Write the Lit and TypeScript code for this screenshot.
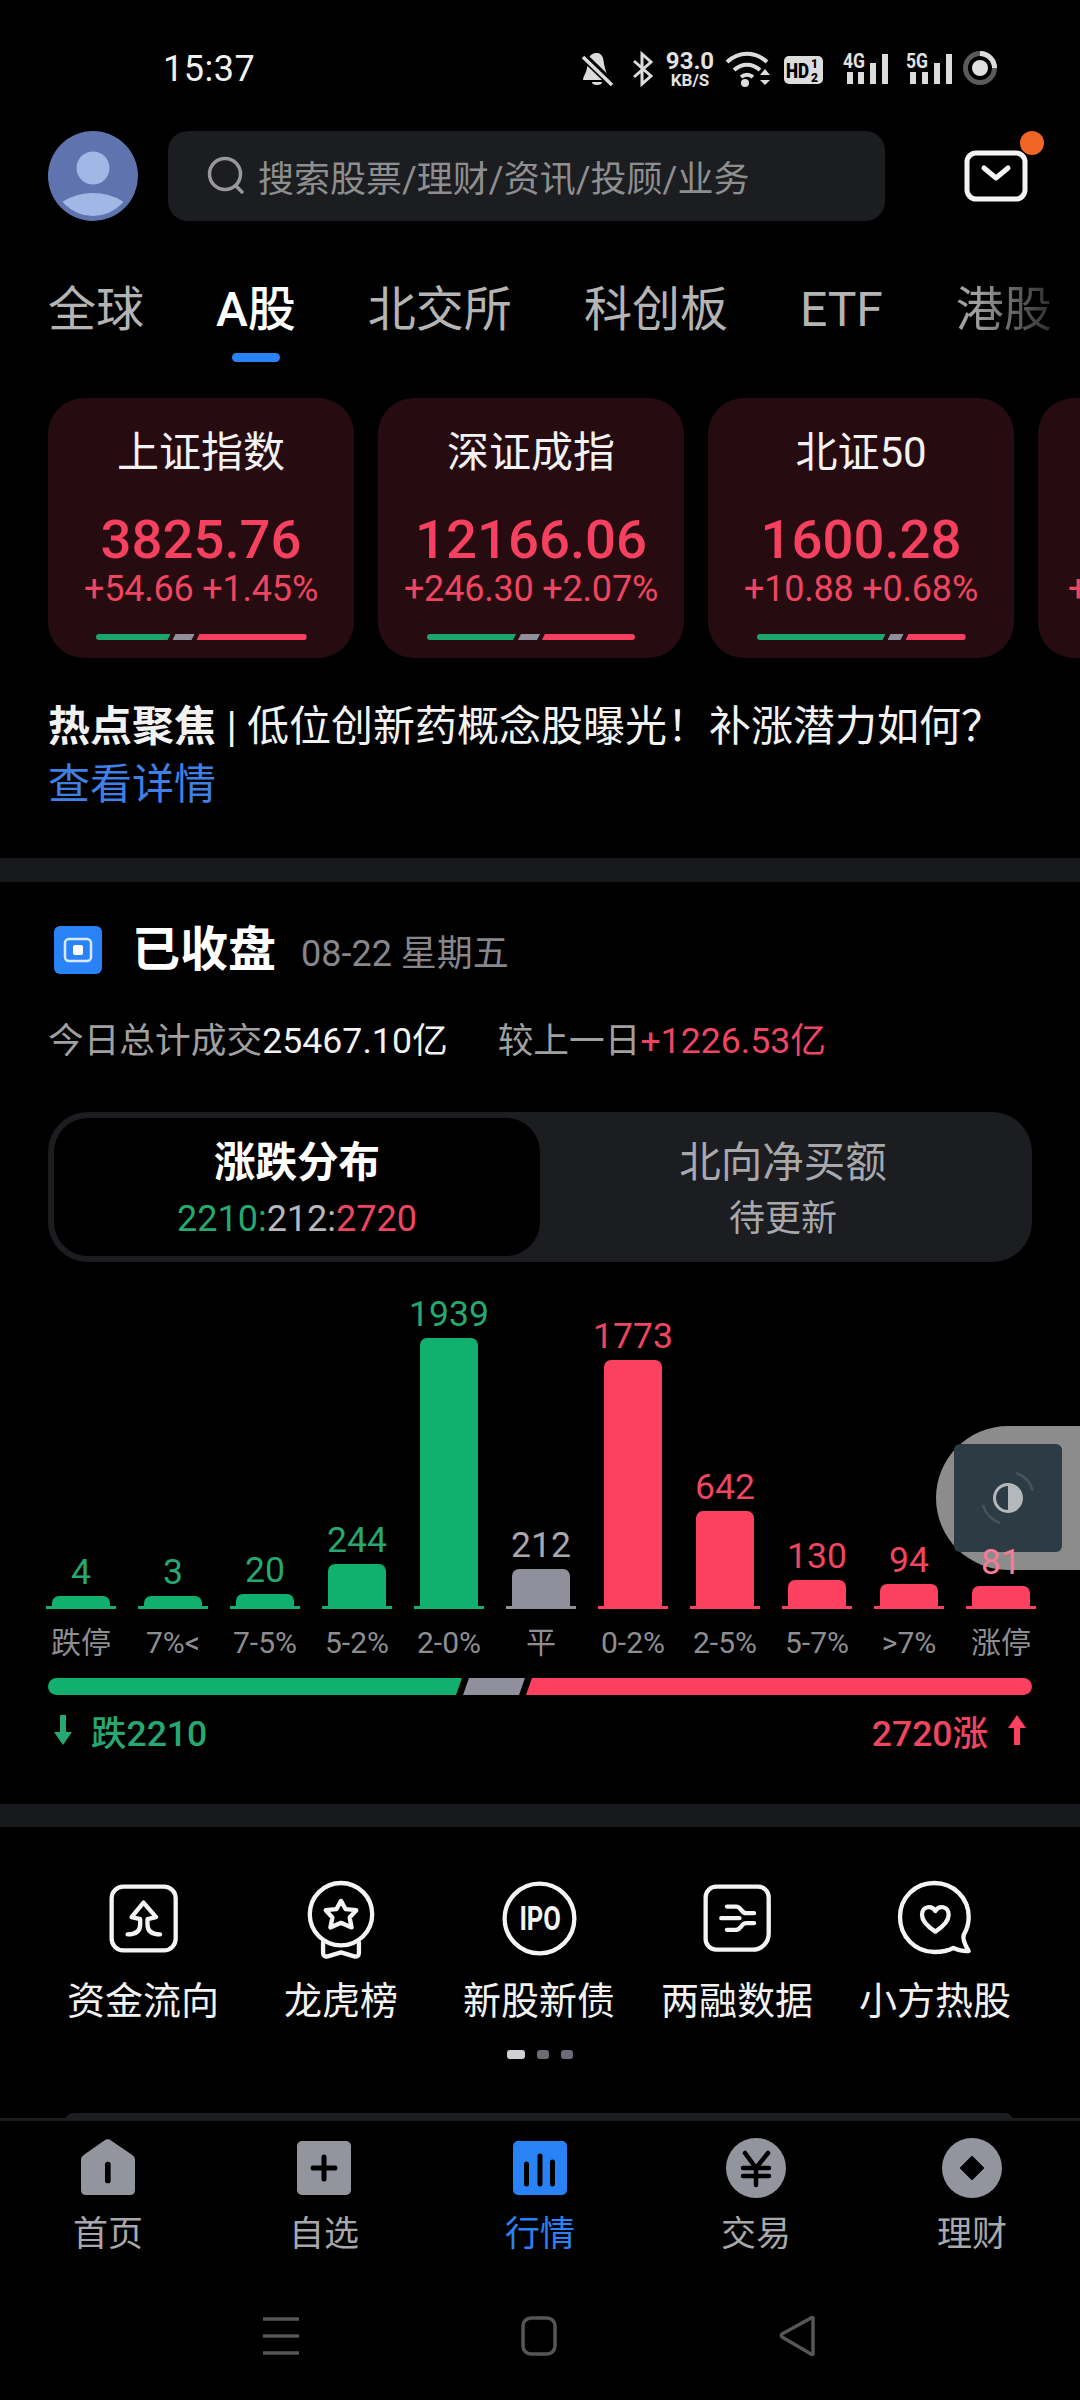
import { LitElement, html, css, svg } from "lit";
import { customElement } from "lit/decorators.js";

const bars = [
  { v: "4", h: 10, c: "g", l: "跌停" },
  { v: "3", h: 10, c: "g", l: "7%<" },
  { v: "20", h: 12, c: "g", l: "7-5%" },
  { v: "244", h: 42, c: "g", l: "5-2%" },
  { v: "1939", h: 268, c: "g", l: "2-0%" },
  { v: "212", h: 37, c: "n", l: "平" },
  { v: "1773", h: 246, c: "r", l: "0-2%" },
  { v: "642", h: 95, c: "r", l: "2-5%" },
  { v: "130", h: 26, c: "r", l: "5-7%" },
  { v: "94", h: 22, c: "r", l: ">7%" },
  { v: "81", h: 20, c: "r", l: "涨停" },
];

const cards = [
  { t: "上证指数", v: "3825.76", s: "+54.66 +1.45%", g: 75, n: 22, r: 110 },
  { t: "深证成指", v: "12166.06", s: "+246.30 +2.07%", g: 89, n: 22, r: 93 },
  { t: "北证50", v: "1600.28", s: "+10.88 +0.68%", g: 129, n: 16, r: 60 },
];

const shortcutIcons = [
  svg`<rect x="66" y="48" width="193" height="192" rx="35"/><path d="M114 192c22 0 38-8 38-30v-16l-26-6 36-44 38 44-26 6v16c0 22 16 30 38 30"/>`,
  svg`<circle cx="756" cy="130" r="94"/><path d="M756 90l14 25 32 3-20 22 6 30-32-14-32 14 6-30-20-22 32-3z"/><path d="M702 215v32c0 8 6 12 14 10l40-12 40 12c8 2 14-2 14-10v-32"/>`,
  svg`<circle cx="1350" cy="147" r="105"/><text x="1352" y="182" text-anchor="middle" font-size="98" font-weight="700" textLength="125" lengthAdjust="spacingAndGlyphs" class="ipo">IPO</text>`,
  svg`<path d="M80 48h126a32 32 0 0 1 32 32v110a48 48 0 0 1-48 48H80a32 32 0 0 1-32-32V80a32 32 0 0 1 32-32z"/><path d="M112 108h28c15 0 15 20 30 20h24M112 178h28c15 0 15-20 30-20h24M95 143h55"/>`,
  svg`<path d="M795 235c-15 8-35 12-57 12-58 0-103-47-103-105S680 40 738 40s103 45 103 102c0 20-7 40-14 52-5 10 2 32 14 50-16 2-34-4-46-9z"/><path d="M741 186c-18-12-40-28-40-50 0-28 30-30 40-12 10-18 40-16 40 12 0 22-22 38-40 50z"/>`,
];

const shortcuts = ["资金流向", "龙虎榜", "新股新债", "两融数据", "小方热股"];
const shortcutBoxes = [
  { vb: "52 34 220 220", w: 73, h: 73 },
  { vb: "645 18 222 250", w: 74, h: 83 },
  { vb: "1228 25 244 244", w: 81, h: 81 },
  { vb: "34 34 220 220", w: 73, h: 73 },
  { vb: "620 25 240 240", w: 80, h: 80 },
];

const navIcons = [
  svg`<g transform="translate(0 1) scale(0.3333) translate(-63 -42)"><path fill="#92949e" d="M132 47q11-8 22 0l62 42q9 6 9 14v92q0 15-15 15H78q-15 0-15-15V103q0-8 9-14z"/><rect x="135" y="110" width="17" height="65" rx="8" fill="#000"/></g>`,
  svg`<rect x="0" y="3" width="54" height="54" rx="5" fill="#92949e"/><path d="M16 30h22M27 19v22" stroke="#000" stroke-width="5" fill="none" stroke-linecap="round"/>`,
  svg`<rect x="0" y="3" width="54" height="54" rx="5" fill="#2a83f6"/><path d="M13.500 26v20M27 18v28M39.500 24v22" stroke="#000" stroke-width="5" fill="none" stroke-linecap="round"/>`,
  svg`<circle cx="30" cy="30" r="30" fill="#92949e"/><path d="M19 15l11 15 12-15M17 30h26M17 38h26M30 30v17" stroke="#000" stroke-width="4.500" fill="none" stroke-linecap="round"/>`,
  svg`<circle cx="30" cy="30" r="30" fill="#92949e"/><path d="M30 19l11 11-11 11-11-11z" fill="#000" stroke="#000" stroke-linejoin="round" stroke-width="2"/>`,
];
const navLabels = ["首页", "自选", "行情", "交易", "理财"];
const navW = [54, 54, 54, 60, 60];
const navLeft = [48, 264, 480, 696, 912];

@customElement("app-root")
export class AppRoot extends LitElement {
  static styles = css`
    :host { display: block; width: 1080px; height: 2400px; background: #000; color: #fff; overflow: hidden; position: relative;
      font-family: Roboto, "Noto Sans CJK SC", sans-serif; }
    * { box-sizing: border-box; }
    .status { height: 131px; padding: 0 0 0 163px; display: flex; align-items: flex-start; justify-content: space-between; }
    .time { font-size: 36px; line-height: 40px; margin-top: 49px; letter-spacing: 0.5px; color: #f2f2f2; }
    .sicons { display: block; margin: 50px 83px 0 0; color: #dcdcdc; }
    .stext { font-family: Roboto, sans-serif; font-weight: 700; fill: #e2e2e2; }
    .search-row { display: flex; align-items: center; height: 90px; padding-left: 48px; }
    .avatar { width: 90px; height: 90px; display: block; flex: none; }
    .search { width: 717px; height: 90px; margin-left: 30px; background: #1b1d21; border-radius: 20px; display: flex; align-items: center; padding-left: 39px; color: #8e8e8e; font-size: 36px; font-weight: 400; gap: 13px; flex: none; }
    .search svg { flex: none; }
    .mail { position: relative; margin-left: 79px; width: 64px; height: 52px; flex: none; }
    .mail svg { display: block; }
    .mail i { position: absolute; width: 24px; height: 24px; background: #ef6524; border-radius: 50%; right: -16px; top: -19px; }
    .tabs { display: flex; height: 98px; margin-top: 49px; padding-left: 48px; font-size: 48px; color: #b4b4b4; font-weight: 400; overflow: hidden; line-height: 80px; }
    .tab { flex: none; position: relative; }
    .tab.active { color: #fff; font-weight: 500; }
    .tab.active::after { content: ""; position: absolute; left: 16px; bottom: 6px; width: 48px; height: 9px; background: #2a83f6; border-radius: 5px; }
    .tab.fade { background: linear-gradient(90deg, #a0a0a0 20%, #2c2c2c 100%); -webkit-background-clip: text; background-clip: text; color: transparent; }
    .cards { display: flex; gap: 24px; padding-left: 48px; margin-top: 30px; overflow: hidden; width: 1080px; }
    .card { width: 306px; height: 260px; flex: none; background: #260c10; border-radius: 36px; display: flex; flex-direction: column; align-items: center; }
    .card .t { font-size: 42px; line-height: 50px; margin-top: 30px; color: #f2f2f2; font-weight: 400; }
    .card .v { font-size: 54.500px; line-height: 60px; margin-top: 31px; color: #f5405f; font-weight: 500; }
    .card .s { font-size: 36px; line-height: 38px; margin-top: 1px; color: #ee4560; font-weight: 400; white-space: nowrap; letter-spacing: -0.2px; }
    .card.peek-card { align-items: flex-start; padding-left: 30px; }
    .card.peek-card .s { margin-top: 172px; }
    .mini { display: flex; gap: 2px; height: 6px; margin-top: 26px; }
    .mini i { display: block; height: 6px; clip-path: polygon(3px 0, 100% 0, calc(100% - 3px) 100%, 0 100%); }
    .mini i:first-child { border-radius: 3px 0 0 3px; clip-path: polygon(0 0, 100% 0, calc(100% - 3px) 100%, 0 100%); }
    .mini i:last-child { border-radius: 0 3px 3px 0; clip-path: polygon(3px 0, 100% 0, 100% 100%, 0 100%); }
    .gb { background: #1ca66d; } .nb { background: #8f909c; } .rb { background: #f5405f; }
    .hot { padding: 40px 48px 0; font-size: 42px; line-height: 58px; color: #f2f2f2; font-weight: 400; height: 200px; white-space: nowrap; }
    .hot b { font-weight: 700; }
    .hot a { color: #3f80e6; display: block; font-size: 42px; }
    .divider { height: 24px; background: #16181b; }
    .sec-head { display: flex; align-items: center; padding: 44px 0 0 54px; height: 92px; }
    .sec-icon { width: 48px; height: 48px; display: block; flex: none; }
    .sec-title { font-size: 48px; line-height: 56px; font-weight: 700; margin-left: 30px; }
    .sec-date { font-size: 36px; color: #86868c; margin-left: 25px; font-weight: 400; }
    .volume { padding: 0 0 0 48px; margin-top: 42px; font-size: 35.700px; line-height: 50px; color: #a0a0a0; font-weight: 400; display: flex; }
    .volume .w { color: #f2f2f2; }
    .volume .r { color: #ef4563; }
    .volume .gap { width: 50px; }
    .toggle { margin: 46px 48px 0; height: 150px; background: #1b1d21; border-radius: 40px; padding: 6px; display: flex; }
    .opt { flex: 1; display: flex; flex-direction: column; align-items: center; color: #a8a8ac; }
    .opt.active { flex: none; width: 486px; background: #000; border-radius: 34px; color: #fff; }
    .opt .a { font-size: 41.500px; line-height: 50px; margin-top: 20px; font-weight: 400; }
    .opt.active .a { font-weight: 700; }
    .opt .b { font-size: 36px; line-height: 44px; margin-top: 9px; font-weight: 400; }
    .green { color: #26a871; } .red { color: #ee4560; } .grey { color: #b8b8bc; }
    .chart { display: flex; height: 347px; gap: 22px; padding-left: 46px; align-items: flex-end; }
    .col { width: 70px; display: flex; flex-direction: column; align-items: center; flex: none; }
    .col .val { font-size: 35.500px; line-height: 40px; margin-bottom: 4px; font-weight: 400; white-space: nowrap; }
    .col .bar { width: 58px; border-radius: 7px 7px 0 0; }
    .col .base { width: 70px; height: 3px; }
    .val.g { color: #26a871; } .val.n { color: #a8a8ae; } .val.r { color: #ee4560; position: relative; z-index: 3; }
    .col:last-child .val { color: #f27d94; }
    .bar.g, .base.g { background: #11b06f; } .bar.n, .base.n { background: #8f909c; } .bar.r, .base.r { background: #fb4060; }
    .cats { display: flex; padding-left: 35px; margin-top: 15px; }
    .cats span { width: 92px; flex: none; text-align: center; font-size: 30px; line-height: 38px; color: #8e8e92; font-weight: 400; white-space: nowrap; }
    .bigbar { display: flex; margin: 16px 48px 0; height: 17px; }
    .seg { height: 17px; }
    .seg.g { width: 414px; background: #11b06f; border-radius: 9px 0 0 9px; clip-path: polygon(0 0, 100% 0, calc(100% - 6px) 100%, 0 100%); }
    .seg.n { width: 62px; background: #8f909c; margin-left: 1px; clip-path: polygon(6px 0, 100% 0, calc(100% - 6px) 100%, 0 100%); }
    .seg.r { flex: 1; background: #fb4060; margin-left: 1px; border-radius: 0 9px 9px 0; clip-path: polygon(6px 0, 100% 0, 100% 100%, 0 100%); }
    .foot { display: flex; justify-content: space-between; align-items: center; padding: 0 54px; margin-top: 13px; height: 44px; font-size: 35.500px; font-weight: 500; }
    .foot div { display: flex; align-items: center; }
    .foot .l svg { margin-right: 19px; }
    .foot .rr svg { margin-left: 20px; }
    .divider2 { height: 23px; margin-top: 52px; background: #16181b; }
    .shortcuts { display: flex; padding-left: 44px; margin-top: 49px; }
    .sc { width: 198px; flex: none; display: flex; flex-direction: column; align-items: center; }
    .sc .ic { height: 84px; display: flex; align-items: center; justify-content: center; }
    .sc svg { fill: none; stroke: #f4f4f4; stroke-width: 13; stroke-linejoin: round; stroke-linecap: round; display: block; }
    .sc .ipo { fill: #f4f4f4; stroke: none; font-family: Roboto, sans-serif; }
    .sc span { font-size: 38px; line-height: 48px; margin-top: 17px; color: #f2f2f2; font-weight: 400; white-space: nowrap; }
    .dots { display: flex; justify-content: center; gap: 12px; margin-top: 25px; }
    .dots i { display: block; width: 12px; height: 9px; border-radius: 3px; background: #6b6b76; }
    .dots i:first-child { width: 18px; background: #cfcfd4; }
    .peek { position: absolute; left: 65px; width: 948px; top: 2113px; height: 8px; background: #1b1d21; border-radius: 16px 16px 0 0; }
    .nav { position: absolute; left: 0; top: 2118px; width: 1080px; height: 282px; background: #000; border-top: 3px solid #1b1d21; }
    .ni { position: absolute; top: 17px; width: 120px; display: flex; flex-direction: column; align-items: center; color: #a8a8ac; }
    .ni svg { display: block; height: 60px; }
    .ni span { font-size: 35px; line-height: 44px; margin-top: 15px; font-weight: 400; }
    .ni.on { color: #2a83f6; }
    .sys { position: absolute; top: 195px; left: 0; width: 1080px; height: 40px; display: block; }
    .float { position: absolute; left: 936px; top: 1426px; width: 144px; height: 144px; background: #8c8c8c; border-radius: 72px 0 0 72px; z-index: 2; }
    .float .inner { position: absolute; left: 18px; top: 18px; width: 108px; height: 108px; background: #2d3b44; border-radius: 6px; display: flex; align-items: center; justify-content: center; }
  `;

  render() {
    return html`
      <div class="status">
        <div class="time">15:37</div>
        ${this.statusIcons()}
      </div>
      <div class="search-row">
        <svg class="avatar" viewBox="0 0 90 90"><defs><clipPath id="av"><circle cx="45" cy="45" r="40"/></clipPath></defs>
          <circle cx="45" cy="45" r="45" fill="#5f74ae"/>
          <circle cx="45" cy="37" r="16.500" fill="#a3b7e6"/>
          <g clip-path="url(#av)"><ellipse cx="45" cy="90" rx="42" ry="28" fill="#a3b7e6"/></g>
        </svg>
        <div class="search">
          <svg width="38" height="40" viewBox="0 0 38 40" fill="none" stroke="#989898" stroke-width="3.500" stroke-linecap="round"><circle cx="18" cy="18" r="15.500"/><path d="M29 30l6 6"/></svg>
          <span>搜索股票/理财/资讯/投顾/业务</span>
        </div>
        <div class="mail">
          <svg width="64" height="52" viewBox="0 0 64 52" fill="none" stroke="#f4f4f6" stroke-width="5" stroke-linecap="round" stroke-linejoin="round"><rect x="3" y="3" width="58" height="46" rx="9"/><path d="M20 18l12 10 12-10"/></svg>
          <i></i>
        </div>
      </div>
      <div class="tabs">
        <div class="tab" style="margin-right:72px">全球</div>
        <div class="tab active" style="margin-right:72px">A股</div>
        <div class="tab" style="margin-right:72px">北交所</div>
        <div class="tab" style="margin-right:72px">科创板</div>
        <div class="tab" style="margin-right:73px">ETF</div>
        <div class="tab fade">港股</div>
      </div>
      <div class="cards">
        ${cards.map((c) => html`<div class="card">
          <div class="t">${c.t}</div>
          <div class="v">${c.v}</div>
          <div class="s">${c.s}</div>
          <div class="mini">
            <i class="gb" style="width:${c.g}px"></i><i class="nb" style="width:${c.n}px"></i><i class="rb" style="width:${c.r}px"></i>
          </div>
        </div>`)}
        <div class="card peek-card"><div class="s">+</div></div>
      </div>
      <div class="hot">
        <b>热点聚焦</b> | 低位创新药概念股曝光\uFF01补涨潜力如何\uFF1F
        <a>查看详情</a>
      </div>
      <div class="divider"></div>
      <div class="sec-head">
        <svg class="sec-icon" viewBox="0 0 48 48"><rect width="48" height="48" rx="6" fill="#2a83f6"/><rect x="11" y="13" width="26" height="22" rx="4" fill="none" stroke="#d8e8ff" stroke-width="2.500"/><rect x="19" y="19" width="10" height="10" rx="2" fill="#fff"/></svg>
        <div class="sec-title">已收盘</div>
        <div class="sec-date">08-22 星期五</div>
      </div>
      <div class="volume">
        <span>今日总计成交</span><span class="w">25467.10亿</span><span class="gap"></span><span>较上一日</span><span class="r">+1226.53亿</span>
      </div>
      <div class="toggle">
        <div class="opt active">
          <div class="a">涨跌分布</div>
          <div class="b"><span class="green">2210:</span><span class="grey">212:</span><span class="red">2720</span></div>
        </div>
        <div class="opt">
          <div class="a">北向净买额</div>
          <div class="b">待更新</div>
        </div>
      </div>
      <div class="chart">
        ${bars.map((b) => html`<div class="col">
          <div class="val ${b.c}">${b.v}</div>
          <div class="bar ${b.c}" style="height:${b.h}px"></div>
          <div class="base ${b.c}"></div>
        </div>`)}
      </div>
      <div class="cats">${bars.map((b) => html`<span>${b.l}</span>`)}</div>
      <div class="bigbar"><div class="seg g"></div><div class="seg n"></div><div class="seg r"></div></div>
      <div class="foot">
        <div class="l green"><svg width="18" height="32" viewBox="0 0 18 32"><path d="M6 1h6v17h6L9 31 0 18h6z" fill="#26a871"/></svg>跌2210</div>
        <div class="rr red">2720涨<svg width="18" height="32" viewBox="0 0 18 32"><path d="M6 31h6V14h6L9 1 0 14h6z" fill="#fb4060"/></svg></div>
      </div>
      <div class="divider2"></div>
      <div class="shortcuts">
        ${shortcuts.map((s, i) => html`<div class="sc">
          <div class="ic"><svg width="${shortcutBoxes[i].w}" height="${shortcutBoxes[i].h}" viewBox="${shortcutBoxes[i].vb}">${shortcutIcons[i]}</svg></div>
          <span>${s}</span>
        </div>`)}
      </div>
      <div class="dots"><i></i><i></i><i></i></div>
      <div class="float"><div class="inner">
        <svg width="60" height="70" viewBox="0 0 60 70" fill="none"><circle cx="30" cy="35" r="13.500" stroke="#b4b8ba" stroke-width="3"/><path d="M30 21.500a13.500 13.500 0 0 1 0 27z" fill="#b4b8ba"/><path d="M38 10a27 27 0 0 1 17 18M22 60A27 27 0 0 1 5 42" stroke="#47545b" stroke-width="2.500"/></svg>
      </div></div>
      <div class="peek"></div>
      <div class="nav">
        ${navIcons.map((ic, i) => html`<div class="ni ${i === 2 ? "on" : ""}" style="left:${navLeft[i]}px">
          <svg width="${navW[i]}" viewBox="0 0 ${navW[i]} 60">${ic}</svg>
          <span>${navLabels[i]}</span>
        </div>`)}
        <svg class="sys" width="1080" height="40" viewBox="0 0 1080 40" fill="none" stroke="#565658" stroke-width="3.500" stroke-linejoin="round">
          <path d="M263 3h36M263 20h36M263 37h36"/>
          <rect x="523" y="2" width="32" height="36" rx="8"/>
          <path d="M813 3v34a1 1 0 0 1-2 1L782 21a2 2 0 0 1 0-3L811 2a1 1 0 0 1 2 1z"/>
        </svg>
      </div>
    `;
  }

  statusIcons() {
    return html`<svg class="sicons" width="420" height="40" viewBox="577 50 420 40">
      <g fill="#dcdcdc">
        <path d="M597 53c3 0 5 2 6 5 1 5 2 12 4 16 1 2 5 3 5 6H583c0-2 1-4 2-6 3-5 2-12 4-16 1-3 4-5 8-5zM592 82h10c0 2-2 3-5 3s-5-1-5-3z"/>
      </g>
      <path d="M583 56l30 29" stroke="#000" stroke-width="8"/>
      <path d="M583 57l29 28" stroke="#dcdcdc" stroke-width="3.500"/>
      <path d="M634 61l17 15-9 8V54l9 8-17 15" fill="none" stroke="#dcdcdc" stroke-width="3"/>
      <text x="690" y="69" class="stext" font-size="24" text-anchor="middle">93.0</text>
      <text x="690" y="86" class="stext" font-size="17" text-anchor="middle">KB/S</text>
      <path d="M727 62c12-11 28-11 40 0M734 70c8-7 18-7 26 0M741 77c4-3 8-3 12 0" fill="none" stroke="#dcdcdc" stroke-width="4"/>
      <circle cx="745" cy="83" r="4" fill="#dcdcdc"/>
      <path d="M760 75l5-6 5 6zM760 80h10l-5 5z" fill="#dcdcdc"/>
      <rect x="784" y="56" width="39" height="28" rx="5" fill="#dcdcdc"/>
      <text x="786" y="78" font-size="21" font-weight="900" fill="#000" textLength="23" lengthAdjust="spacingAndGlyphs" style="font-family:Roboto,sans-serif">HD</text>
      <text x="811" y="68" font-size="12" font-weight="900" fill="#000" style="font-family:Roboto,sans-serif">1</text>
      <text x="811" y="82" font-size="12" font-weight="900" fill="#000" style="font-family:Roboto,sans-serif">2</text>
      <text x="843" y="68" class="stext" font-size="21" textLength="22" lengthAdjust="spacingAndGlyphs">4G</text>
      <g fill="#dcdcdc"><rect x="847" y="72" width="6" height="12"/><rect x="858" y="72" width="6" height="12"/><rect x="870" y="63" width="6" height="21"/><rect x="882" y="54" width="6" height="30"/></g>
      <text x="906" y="68" class="stext" font-size="21" textLength="22" lengthAdjust="spacingAndGlyphs">5G</text>
      <g fill="#dcdcdc"><rect x="910" y="72" width="6" height="12"/><rect x="922" y="72" width="6" height="12"/><rect x="934" y="63" width="6" height="21"/><rect x="946" y="54" width="6" height="30"/></g>
      <circle cx="980" cy="68" r="14.500" fill="none" stroke="#5a5a5a" stroke-width="5"/>
      <path d="M980 53.500a14.500 14.500 0 0 1 14.500 14.500" fill="none" stroke="#dcdcdc" stroke-width="5"/>
      <circle cx="980" cy="68" r="8" fill="#e0e0e0"/>
    </svg>`;
  }
}
